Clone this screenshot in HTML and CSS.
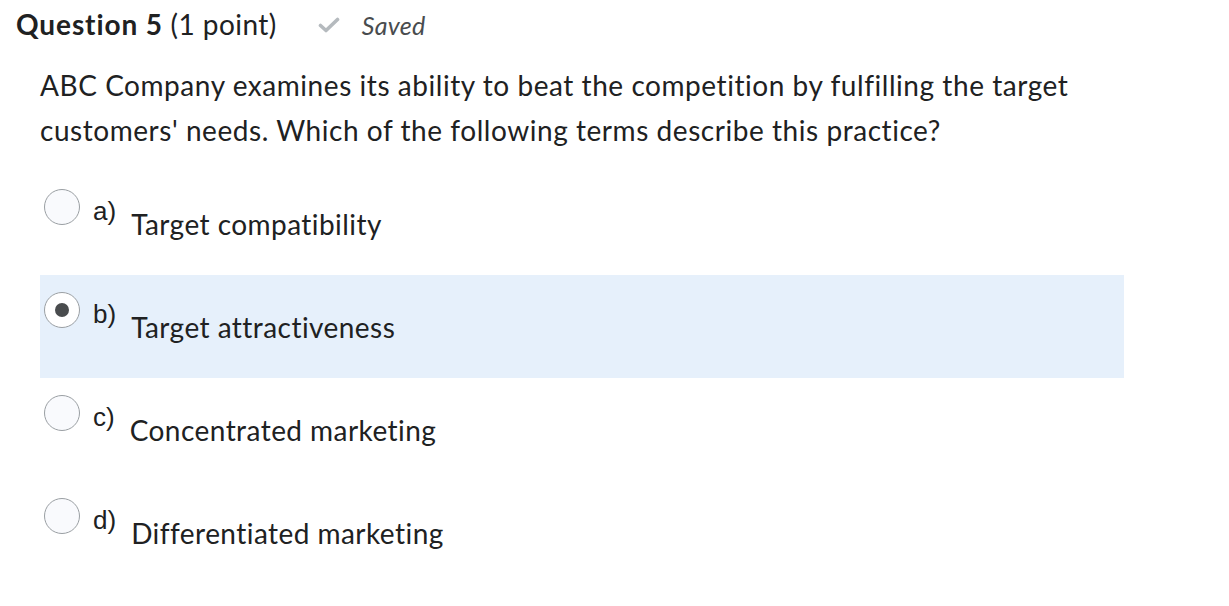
FILE: index.html
```html
<!DOCTYPE html>
<html lang="en">
<head>
<meta charset="utf-8">
<title>Question 5</title>
<link rel="stylesheet" href="styles.css">
</head>
<body>
<div class="page">
  <div class="header">
    <h2 class="title"><strong>Question 5</strong> (1 point)</h2>
    <span class="status">
      <svg class="check" width="22" height="16" viewBox="0 0 22 16" aria-hidden="true"><path d="M2.5 8.5 L8 13.5 L19.5 2.5" fill="none" stroke="#b5babe" stroke-width="3.6" stroke-linecap="round" stroke-linejoin="round"/></svg>
      <em>Saved</em>
    </span>
  </div>
  <p class="question">ABC Company examines its ability to beat the competition by fulfilling the target customers' needs. Which of the following terms describe this practice?</p>
  <div class="options">
    <label class="option">
      <span class="radio"></span>
      <span class="letter">a)</span>
      <span class="text">Target compatibility</span>
    </label>
    <label class="option selected">
      <span class="radio checked"></span>
      <span class="letter">b)</span>
      <span class="text">Target attractiveness</span>
    </label>
    <label class="option">
      <span class="radio"></span>
      <span class="letter">c)</span>
      <span class="text">Concentrated marketing</span>
    </label>
    <label class="option">
      <span class="radio"></span>
      <span class="letter">d)</span>
      <span class="text">Differentiated marketing</span>
    </label>
  </div>
</div>
</body>
</html>
```
FILE: styles.css
```css
html, body {
  margin: 0;
  padding: 0;
  background: #ffffff;
}
body {
  font-family: Lato, "Noto Sans", sans-serif;
  color: #202122;
  font-variant-ligatures: none;
}
.page {
  padding: 4px 16px 0 16px;
}
.header {
  display: flex;
  align-items: baseline;
  gap: 41px;
}
.title {
  margin: 0;
  font-size: 28px;
  font-weight: 400;
  line-height: 40px;
  letter-spacing: 0.45px;
}
.title strong {
  font-weight: 700;
  letter-spacing: 0.9px;
}
.status {
  display: flex;
  align-items: baseline;
  gap: 22px;
  color: #494c4e;
  font-size: 25px;
  letter-spacing: 0.3px;
}
.check {
  align-self: center;
}
.question {
  margin: 19px 0 0 24px;
  font-size: 28px;
  line-height: 45px;
  letter-spacing: 0.55px;
  max-width: 1090px;
}
.options {
  margin: 19px 0 0 24px;
  width: 1084px;
}
.option {
  display: flex;
  align-items: flex-start;
  height: 103px;
  box-sizing: border-box;
  padding: 17px 0 0 4px;
}
.option.selected {
  background: #e6f0fb;
}
.radio {
  width: 34px;
  height: 34px;
  border: 1px solid #9a9fa3;
  border-radius: 50%;
  background: #f9fafd;
  box-sizing: content-box;
  flex: none;
  position: relative;
}
.radio.checked {
  background: #ffffff;
}
.radio.checked::after {
  content: "";
  position: absolute;
  left: 10px;
  top: 10px;
  width: 14px;
  height: 14px;
  border-radius: 50%;
  background: #494c4e;
}
.letter {
  font-family: "Liberation Sans", Arial, sans-serif;
  font-size: 26px;
  line-height: 26px;
  margin: 9px 0 0 13px;
}
.text {
  font-size: 28px;
  line-height: 30px;
  letter-spacing: 0.45px;
  margin: 20px 0 0 15px;
}
```
